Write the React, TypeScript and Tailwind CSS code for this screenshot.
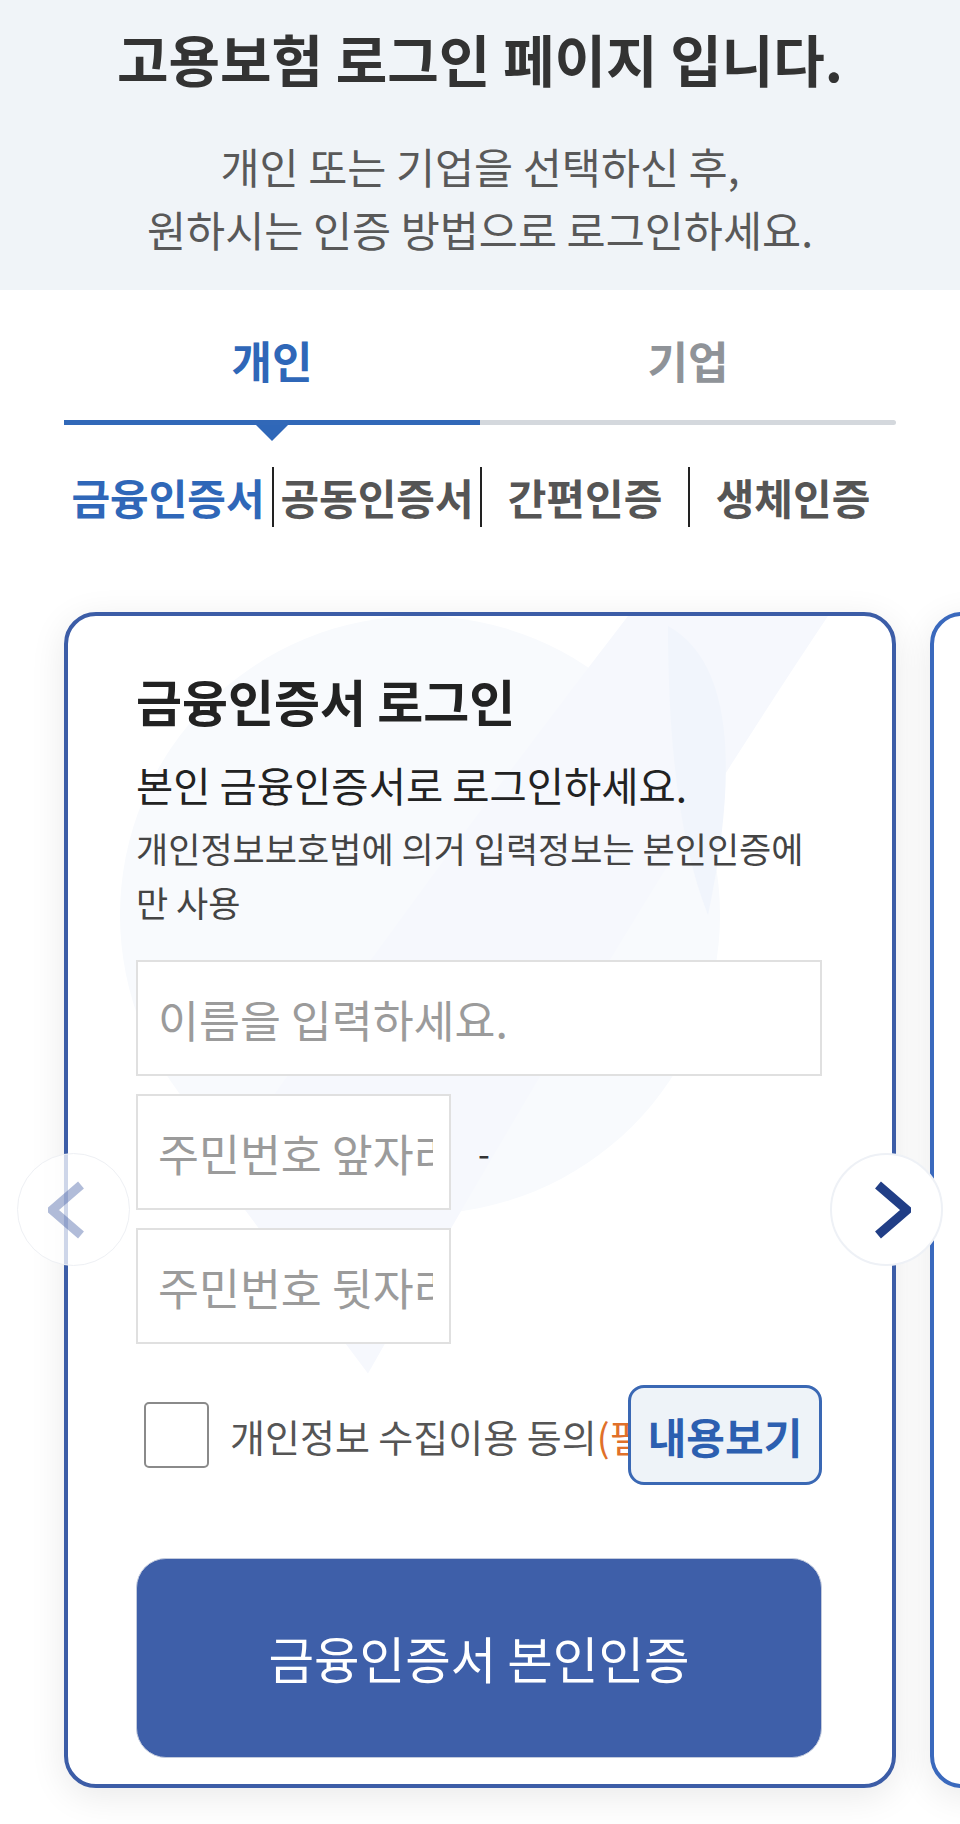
import { useState } from "react";

const mainTabs = ["개인", "기업"];
const certTabs = ["금융인증서", "공동인증서", "간편인증", "생체인증"];

function Chevron({ direction, className }: { direction: "left" | "right"; className: string }) {
  const points = direction === "left" ? "33,4 4,29 33,54" : "4,4 33,29 4,54";
  return (
    <svg className={className} viewBox="0 0 37 58" fill="none">
      <polyline points={points} stroke="currentColor" strokeWidth="9" strokeLinejoin="miter" />
    </svg>
  );
}

function CardDecor() {
  return (
    <svg className="pointer-events-none absolute inset-0 h-full w-full" viewBox="0 0 824 1172" preserveAspectRatio="none">
      <circle cx="352" cy="300" r="300" fill="#f8fafd" />
      <path d="M560 0 L760 0 Q560 300 300 760 L150 560 Q360 260 560 0 Z" fill="#f6f8fd" />
      <path d="M600 10 Q690 60 640 300 Q600 200 600 10 Z" fill="#f1f5fc" />
    </svg>
  );
}

export default function App() {
  const [activeTab] = useState(0);
  const [activeCert] = useState(0);

  return (
    <div className="min-h-[1824px] w-[960px] overflow-hidden bg-white font-['Noto_Sans_CJK_KR','Noto_Sans',sans-serif] text-[#222]">
      <header className="bg-[#f0f4f8] pt-[22px] pb-[30px] text-center">
        <h1 className="text-[56px] leading-[72px] font-bold text-[#333]">
          고용보험 로그인 페이지 입니다.
        </h1>
        <p className="mt-[40px] text-[42.5px] leading-[63px] text-[#595959]">
          개인 또는 기업을 선택하신 후,
          <br />
          원하시는 인증 방법으로 로그인하세요.
        </p>
      </header>

      <nav className="px-16">
        <div className="grid grid-cols-2">
          {mainTabs.map((tab, i) => (
            <div key={tab} className="flex flex-col items-center">
              <button
                className={`w-full pt-[48px] pb-[38px] text-[44px] leading-[44px] font-bold ${
                  i === activeTab ? "text-[#2f67b8]" : "text-[#8f9398]"
                }`}
                type="button"
              >
                {tab}
              </button>
              <div
                className={`h-[5px] w-full ${
                  i === activeTab ? "bg-[#3168b8]" : "rounded-r-full bg-[#d4d8dd]"
                }`}
              />
              {i === activeTab && (
                <div className="h-0 w-0 border-x-[16px] border-t-[16px] border-x-transparent border-t-[#2f67b8]" />
              )}
            </div>
          ))}
        </div>

        <div className="mt-[26px] grid h-[60px] grid-cols-4">
          {certTabs.map((tab, i) => (
            <button
              key={tab}
              className={`flex items-center justify-center text-[42px] leading-[60px] font-bold whitespace-nowrap ${
                i > 0 ? "border-l-2 border-[#222]" : ""
              } ${i === activeCert ? "text-[#2f67b8]" : "text-[#555]"}`}
              type="button"
            >
              {tab}
            </button>
          ))}
        </div>
      </nav>

      <section className="relative mt-[45px] overflow-hidden">
        <div className="flex gap-[34px] px-16 pt-[40px] pb-[36px]">
          <div className="relative w-[832px] shrink-0 overflow-hidden rounded-[32px] border-4 border-[#3c5da7] bg-white shadow-[0_8px_36px_rgba(0,0,0,0.09)]">
            <CardDecor />
            <div className="relative pt-[56px] pr-[70px] pb-[26px] pl-[68px]">
              <h2 className="text-[50px] leading-[56px] font-bold text-[#222]">
                금융인증서 로그인
              </h2>
              <p className="mt-[32px] text-[40.5px] leading-[50px] text-[#222]">
                본인 금융인증서로 로그인하세요.
              </p>
              <p className="mt-[11px] text-[35px] leading-[54px] text-[#444]">
                개인정보보호법에 의거 입력정보는 본인인증에만 사용
              </p>

              <div className="mt-[31px] flex flex-col gap-[18px]">
                <input
                  className="h-[116px] w-full border-2 border-[#e0e0e0] bg-white pr-4 pl-5 text-[44.5px] text-[#333] outline-none placeholder:text-[#9b9b9b]"
                  placeholder="이름을 입력하세요."
                />
                <div className="flex items-center gap-[27px]">
                  <input
                    className="h-[116px] w-[315px] border-2 border-[#e0e0e0] bg-white pr-4 pl-5 text-[44.5px] text-[#333] outline-none placeholder:text-[#9b9b9b]"
                    placeholder="주민번호 앞자리"
                  />
                  <span className="text-[34px] text-[#333]">-</span>
                </div>
                <input
                  className="h-[116px] w-[315px] border-2 border-[#e0e0e0] bg-white pr-4 pl-5 text-[44.5px] text-[#333] outline-none placeholder:text-[#9b9b9b]"
                  placeholder="주민번호 뒷자리"
                />
              </div>

              <div className="mt-[41px] flex h-[100px] items-center">
                <input
                  className="ml-2 h-[66px] w-[65px] shrink-0 appearance-none rounded-[5px] border-2 border-[#8a8a8a] bg-white"
                  type="checkbox"
                />
                <span className="ml-[21px] min-w-0 flex-1 overflow-hidden text-[38px] whitespace-nowrap text-[#555]">
                  개인정보 수집이용 동의<span className="text-[#e0702a]">(필수)</span>
                </span>
                <button
                  className="h-[100px] w-[194px] shrink-0 rounded-[16px] border-[3px] border-[#3a68b4] bg-[#eef3f8] text-[42px] font-bold text-[#2c5fb0]"
                  type="button"
                >
                  내용보기
                </button>
              </div>

              <button
                className="mt-[73px] h-[200px] w-full rounded-[30px] border border-[#c2cadc] bg-[#3e5fa9] text-[49.5px] text-white"
                type="button"
              >
                금융인증서 본인인증
              </button>
            </div>
          </div>

          <div className="w-[832px] shrink-0 rounded-[32px] border-4 border-[#3a69bd] bg-white shadow-[0_8px_36px_rgba(0,0,0,0.09)]" />
        </div>

        <button
          aria-label="이전"
          className="absolute top-[581px] left-[17px] flex h-[113px] w-[113px] items-center justify-center rounded-full border border-[#eef0f4] bg-white/75"
          type="button"
        >
          <Chevron className="mr-[14px] h-[58px] w-[37px] text-[#3c57a0]/40" direction="left" />
        </button>
        <button
          aria-label="다음"
          className="absolute top-[581px] left-[830px] flex h-[113px] w-[113px] items-center justify-center rounded-full border-2 border-[#eef1f6] bg-white"
          type="button"
        >
          <Chevron className="ml-[12px] h-[58px] w-[37px] text-[#213e86]" direction="right" />
        </button>
      </section>
    </div>
  );
}
